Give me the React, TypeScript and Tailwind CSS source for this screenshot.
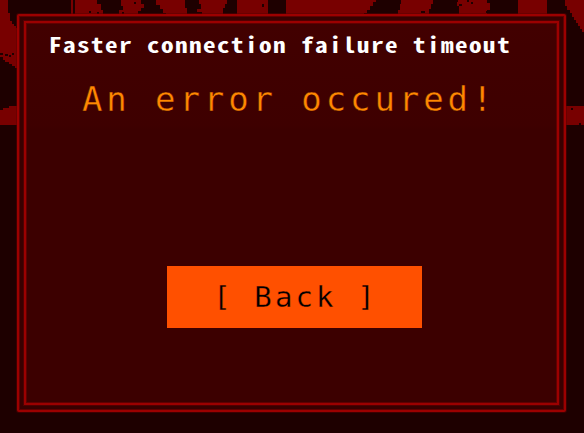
function Backdrop() {
  return (
    <svg className="absolute inset-0" width="584" height="433" shapeRendering="crispEdges" fill="#780000">
      <path d="M0 0H8V13H10V21H12V24H14V26H16V28H20V68H15V66H12V64H9V62H5V60H3V57H0Z" />
      <path d="M71 0H73V20H71ZM75 0H97V4H101V10H103V20H75Z" />
      <path d="M121 0H141V4H144V8H141V11H138V20H119V10H123V6H121Z" />
      <path d="M156 0H185V8H187V20H166V13H163V9H160V5H156Z" />
      <path d="M199 0H227V4H225V8H223V20H202V12H197V9H201V4H199Z" />
      <path d="M237 0H268V20H237ZM286 0H376V2H373V6H370V10H367V13H364V20H286Z" />
      <path d="M401 0H433V4H431V9H429V20H398V10H400V4H401ZM458 0H487V3H490V10H487V20H459V6H457V2H458Z" />
      <path d="M518 0H547V20H518ZM565 0H584V32H582V29H580V26H578V23H576V20H574V17H572V13H570V10H567V6H565Z" />
      <path d="M0 110H3V108H9V106H20V125H0ZM566 106H584V125H566Z" />
      <g fill="#1e0000">
        <path d="M0 53H3V55H0ZM5 54H8V56H5ZM9 55H11V57H9ZM12 53H14V55H12ZM89 11H91V13H89ZM97 12H99V14H97ZM122 12H124V14H122ZM134 2H136V4H134ZM262 4H264V7H262ZM421 11H425V13H421ZM459 4H462V6H459ZM467 0H469V2H467ZM471 2H473V4H471ZM486 11H490V13H486ZM571 108H573V110H571ZM579 123H581V125H579Z" />
      </g>
    </svg>
  );
}

export default function App() {
  return (
    <main className="relative h-[433px] w-[584px] overflow-hidden bg-[#1e0000] pt-[14px] pl-[17px]">
      <Backdrop />
      <section className="relative h-[398px] w-[549px] rounded-[2px] border-2 border-[#9c0000] bg-[#380000] p-[5px] shadow-[0_0_0_1px_#5a000080,inset_0_0_0_1px_#600000]">
        <div className="flex h-full flex-col items-center border-2 border-[#9c0000] bg-linear-to-b from-[#420000] from-0% via-[#3e0000] via-27% to-[#3c0000] to-28% shadow-[0_0_0_1px_#500000,inset_0_0_0_1px_#600000]">
          <h1 className="mt-[5px] h-[32px] w-[483px] self-start pl-[23px] font-['Noto_Sans_Mono_CJK_SC','Noto_Sans_CJK_SC',monospace] text-[21px] leading-[32px] font-bold whitespace-nowrap text-white">
            <span className="inline-block origin-left scale-x-[1.2] tracking-[1.17px]">Faster connection failure timeout</span>
          </h1>
          <p className="mt-[19px] h-[40px] w-full pl-[56px] font-['DejaVu_Sans_Mono',monospace] text-[34px] leading-[40px] tracking-[3.9px] whitespace-nowrap text-[#ff8800] [-webkit-text-stroke:0.4px_#3e0000]">
            An error occured!
          </p>
          <button className="mt-[147px] mr-[-6px] h-[62px] w-[255px] bg-[#ff5000] pl-[2px] font-['DejaVu_Sans_Mono',monospace] text-[29px] leading-[62px] tracking-[3.1px] whitespace-pre text-black [-webkit-text-stroke:0.3px_#ff5000]">
            [ Back ]
          </button>
        </div>
      </section>
    </main>
  );
}
